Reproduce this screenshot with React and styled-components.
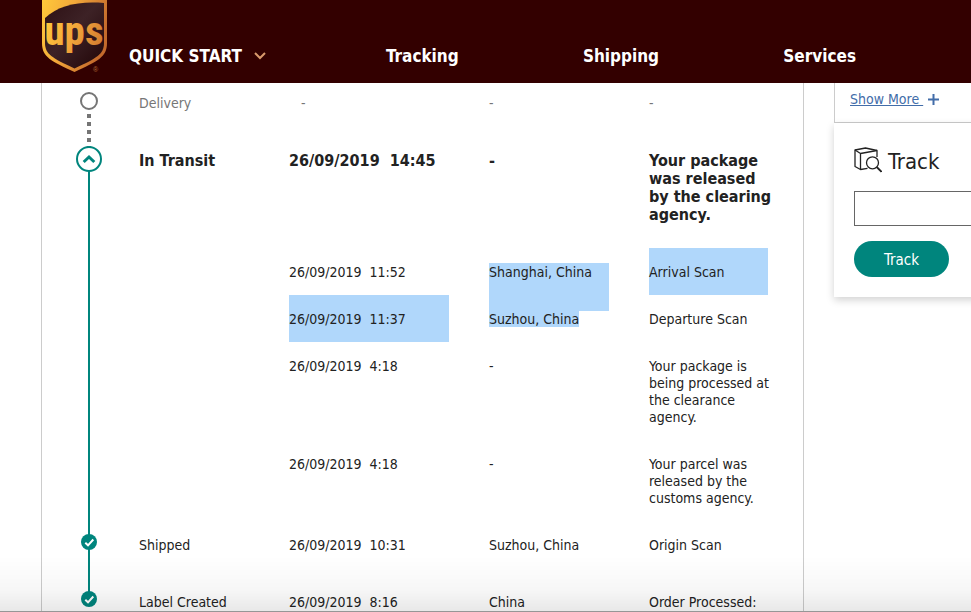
import React from 'react';
import styled, { createGlobalStyle, css } from 'styled-components';

const TEAL = '#00857d';
const SELECTION = '#b0d7fb';

const GlobalStyle = createGlobalStyle`
  * {
    box-sizing: border-box;
  }

  body {
    margin: 0;
    background: #fff;
    color: #222;
    font-family: Tahoma, "DejaVu Sans Condensed", "Noto Sans", sans-serif;
    font-size: 14px;
    line-height: 17px;
  }
`;

const Page = styled.div`
  height: 100vh;
  overflow: hidden;
  display: flex;
  flex-direction: column;
`;

const Header = styled.header`
  flex: none;
  display: flex;
  align-items: flex-start;
  gap: 21px;
  height: 83px;
  padding: 0 52px 0 41px;
  background: #330000;
`;

const LogoLink = styled.a`
  flex: none;
  display: block;
  width: 67px;
  height: 74px;
`;

const Nav = styled.nav`
  flex: 1;
  display: grid;
  grid-template-columns: 194px repeat(3, 1fr);
  justify-items: center;
  padding-top: 46px;
`;

const navItem = css`
  color: #fff;
  font-family: inherit;
  font-size: 17px;
  font-weight: bold;
  line-height: 20px;
`;

const NavLink = styled.a`
  ${navItem}
  text-decoration: none;
`;

const NavButton = styled.button`
  ${navItem}
  justify-self: start;
  display: flex;
  align-items: center;
  gap: 12px;
  padding: 0;
  border: none;
  background: none;
`;

const Main = styled.main`
  flex: 1;
  display: flex;
  align-items: stretch;
  gap: 30px;
  padding-left: 41px;
  min-height: 0;
`;

const Progress = styled.section`
  flex: 1;
  border: solid #ccc;
  border-width: 0 1px;
`;

const ProgressTable = styled.table`
  width: 100%;
  table-layout: fixed;
  border-collapse: collapse;
`;

const Col = styled.col`
  width: ${props => props.$width};
`;

const Row = styled.tr`
  color: ${props => (props.$muted ? '#767676' : 'inherit')};
  font-size: ${props => (props.$current ? '16px' : '14px')};
  font-weight: ${props => (props.$current ? 'bold' : 'normal')};
  line-height: ${props => (props.$current ? '18px' : '17px')};
`;

const dots = 'repeating-linear-gradient(#757575 0 4px, transparent 4px 8px)';
const line = `linear-gradient(${TEAL}, ${TEAL})`;

const rails = {
    pending: `${dots} 45px 31px / 4px 100% no-repeat`,
    current: `${dots} 45px 2px / 4px 12px no-repeat, ${line} 46px 24px / 2px 100% no-repeat`,
    done: `${line} 46px 0 / 2px 100% no-repeat`,
    last: `${line} 46px 0 / 2px 16px no-repeat`,
};

const markerTop = { pending: '8px', current: '10px', done: '13px', last: '13px' };

const MarkerCell = styled.td`
  padding: ${props => markerTop[props.$rail]} 0 0;
  background: ${props => rails[props.$rail]};
  vertical-align: top;

  svg, button {
    display: block;
    margin: 0 auto;
  }
`;

const MarkerBox = styled.div`
  width: 94px;
`;

const ToggleButton = styled.button`
  padding: 0;
  border: none;
  background: none;
`;

const Cell = styled.td`
  padding: 0 ${props => (props.$last ? '27px' : '40px')} 0 0;
  vertical-align: top;
  text-align: left;
  font-weight: inherit;
`;

const selections = {
    full: `linear-gradient(${SELECTION}, ${SELECTION})`,
    below: `linear-gradient(transparent 15px, ${SELECTION} 15px)`,
    above: `linear-gradient(${SELECTION} 16px, transparent 16px)`,
};

const CellText = styled.div`
  padding: ${props => (props.$first ? '12px' : '16px')} 0 ${props => (props.$milestone ? '24px' : '14px')};
  background: ${props => selections[props.$selection] || 'none'} no-repeat;
  background-size: ${props => (props.$last ? 'calc(100% - 8px)' : '100%')} 100%;
  white-space: pre-wrap;
`;

const Mark = styled.mark`
  background: ${SELECTION};
  color: inherit;
`;

const Sidebar = styled.aside`
  flex: 0 0 137px;
  min-width: 0;
`;

// both panels run past the right edge of the window
const MorePanel = styled.div`
  width: 300px;
  height: 40px;
  padding: 8px 15px;
  border: solid #ccc;
  border-width: 0 0 1px 1px;
`;

const MoreLink = styled.a`
  display: inline-flex;
  align-items: center;
  gap: 5px;
  color: #426da9;
  text-decoration: none;

  span {
    text-decoration: underline;
    white-space: pre;
  }
`;

const TrackPanel = styled.form`
  width: 300px;
  padding: 24px 20px 20px;
  box-shadow: 0 3px 8px rgba(0, 0, 0, 0.18);
`;

const TrackTitle = styled.label`
  display: flex;
  align-items: center;
  gap: 6px;
  margin-bottom: 14px;
  font-size: 22px;
  line-height: 30px;
`;

const TrackInput = styled.input`
  display: block;
  width: 100%;
  height: 35px;
  margin-bottom: 15px;
  border: 1px solid #666;
  background: #fff;
`;

const TrackButton = styled.button`
  width: 95px;
  height: 36px;
  padding: 2px 0 0;
  border: none;
  border-radius: 18px;
  background: ${TEAL};
  color: #fff;
  font-family: inherit;
  font-size: 15px;
`;

const BottomShade = styled.div`
  position: fixed;
  left: 0;
  right: 0;
  bottom: 0;
  height: 56px;
  border-bottom: 1px solid #969696;
  background: linear-gradient(rgba(0, 0, 0, 0), rgba(0, 0, 0, 0.03) 60%, rgba(0, 0, 0, 0.09));
  pointer-events: none;
`;

const Logo = () => (
    <svg width="67" height="74" viewBox="0 0 67 74" role="img" aria-label="UPS">
        <defs>
            <linearGradient id="gold" x1="0" y1="0" x2="1" y2="0.35">
                <stop offset="0" stopColor="#ffc93a"/>
                <stop offset="0.45" stopColor="#f3a93a"/>
                <stop offset="1" stopColor="#c46a2c"/>
            </linearGradient>
            <linearGradient id="brown" x1="0" y1="0" x2="1" y2="1">
                <stop offset="0" stopColor="#2d1014"/>
                <stop offset="0.45" stopColor="#3d2226"/>
                <stop offset="1" stopColor="#210507"/>
            </linearGradient>
            <linearGradient id="letters" gradientUnits="userSpaceOnUse" x1="5" y1="20" x2="62" y2="45">
                <stop offset="0" stopColor="#ffc93c"/>
                <stop offset="0.5" stopColor="#f2a53a"/>
                <stop offset="1" stopColor="#d07a30"/>
            </linearGradient>
        </defs>
        <path d="M1 0H66V43C66 57 57 61 33.500 72C10 61 1 57 1 43Z" fill="url(#gold)"/>
        <path d="M4 18C18 5 38 1 63 3V43C63 54 56 58 33.500 68.500C11 58 4 54 4 43Z" fill="url(#brown)"/>
        <text x="33" y="45" textAnchor="middle" fontFamily='"Liberation Sans Narrow", "Roboto Condensed", "DejaVu Sans Condensed", sans-serif' fontWeight="bold" fontSize="41" fill="url(#letters)">ups</text>
        <text x="52" y="72" fontFamily="Liberation Sans, sans-serif" fontSize="7" fill="#b56a35">®</text>
    </svg>
);

const DownIcon = () => (
    <svg width="12" height="8" viewBox="0 0 12 8" fill="none" stroke="#d99a6c" strokeWidth="2" aria-hidden="true">
        <path d="M1 1L6 6L11 1"/>
    </svg>
);

const PendingIcon = () => (
    <svg width="20" height="20" viewBox="0 0 20 20" aria-hidden="true">
        <circle cx="10" cy="10" r="8" fill="#fff" stroke="#757575" strokeWidth="2"/>
    </svg>
);

const CurrentIcon = () => (
    <svg width="26" height="26" viewBox="0 0 26 26" fill="none" stroke={TEAL} aria-hidden="true">
        <circle cx="13" cy="13" r="12" fill="#fff" strokeWidth="2"/>
        <path d="M7.700 16L13 11L18.300 16" strokeWidth="3"/>
    </svg>
);

const DoneIcon = () => (
    <svg width="16" height="16" viewBox="0 0 16 16" fill="none" aria-hidden="true">
        <circle cx="8" cy="8" r="8" fill={TEAL}/>
        <path d="M4.300 8.800L7 11.300L12.300 5.500" stroke="#fff" strokeWidth="2"/>
    </svg>
);

const PlusIcon = () => (
    <svg width="11" height="11" viewBox="0 0 11 11" stroke="#426da9" strokeWidth="2" aria-hidden="true">
        <path d="M5.500 0V11M0 5.500H11"/>
    </svg>
);

const PackageIcon = () => (
    <svg width="28" height="30" viewBox="0 0 28 30" fill="none" stroke="#222" strokeWidth="1.300" strokeLinejoin="round" aria-hidden="true">
        <path d="M13.500 21.300L6.500 22.500L1 19.500V3L11.500 1L23 3.500V10"/>
        <path d="M1 3L6.500 6.500V22.500M6.500 6.500L23 3.500"/>
        <circle cx="18.500" cy="15.800" r="6"/>
        <path d="M22.700 20L27.500 24.800" strokeWidth="1.800"/>
    </svg>
);

const icons = {
    pending: <PendingIcon/>,
    done: <DoneIcon/>,
    last: <DoneIcon/>,
};

const events = [
    { rail: 'pending', milestone: true, status: 'Delivery', date: '   -', location: '-', activity: '-' },
    { rail: 'current', milestone: true, status: 'In Transit', date: '26/09/2019  14:45', location: '-', activity: 'Your package was released by the clearing agency.' },
    { rail: 'done', date: '26/09/2019  11:52', location: 'Shanghai, China', activity: 'Arrival Scan', selected: { location: 'below', activity: 'full' } },
    { rail: 'done', date: '26/09/2019  11:37', location: 'Suzhou, China', activity: 'Departure Scan', selected: { date: 'full', location: 'above' } },
    { rail: 'done', date: '26/09/2019  4:18', location: '-', activity: 'Your package is being processed at the clearance agency.' },
    { rail: 'done', date: '26/09/2019  4:18', location: '-', activity: 'Your parcel was released by the customs agency.' },
    { rail: 'done', milestone: true, status: 'Shipped', date: '26/09/2019  10:31', location: 'Suzhou, China', activity: 'Origin Scan' },
    { rail: 'last', milestone: true, status: 'Label Created', date: '26/09/2019  8:16', location: 'China', activity: 'Order Processed:' },
];

const EventRow = ({ event, first }) => {
    const { rail, milestone, status, selected = {} } = event;
    const current = rail === 'current';

    return (
        <Row $muted={rail === 'pending'} $current={current}>
            <MarkerCell $rail={rail}>
                <MarkerBox>
                    {current
                        ? <ToggleButton type={'button'} aria-label={'Hide details'}><CurrentIcon/></ToggleButton>
                        : milestone && icons[rail]}
                </MarkerBox>
            </MarkerCell>
            <Cell as={milestone ? 'th' : 'td'} scope={milestone ? 'row' : undefined}>
                <CellText $first={first} $milestone={milestone}>{status}</CellText>
            </Cell>
            {['date', 'location', 'activity'].map(key => (
                <Cell key={key} $last={key === 'activity'}>
                    <CellText $first={first} $milestone={milestone} $last={key === 'activity'} $selection={selected[key]}>
                        {selected[key] === 'above' ? <Mark>{event[key]}</Mark> : event[key]}
                    </CellText>
                </Cell>
            ))}
        </Row>
    );
};

const App = () => (
    <>
        <GlobalStyle/>
        <Page>
            <Header>
                <LogoLink href="#home"><Logo/></LogoLink>
                <Nav>
                    <NavButton type={'button'}>QUICK START <DownIcon/></NavButton>
                    <NavLink href="#tracking">Tracking</NavLink>
                    <NavLink href="#shipping">Shipping</NavLink>
                    <NavLink href="#services">Services</NavLink>
                </Nav>
            </Header>
            <Main>
                <Progress>
                    <ProgressTable>
                        <colgroup>
                            <Col $width="97px"/>
                            <Col $width="150px"/>
                            <Col $width="200px"/>
                            <Col $width="160px"/>
                            <Col/>
                        </colgroup>
                        <tbody>
                            {events.map((event, index) => (
                                <EventRow key={index} event={event} first={index === 0}/>
                            ))}
                        </tbody>
                    </ProgressTable>
                </Progress>
                <Sidebar>
                    <MorePanel>
                        <MoreLink href="#more"><span>{'Show More '}</span><PlusIcon/></MoreLink>
                    </MorePanel>
                    <TrackPanel>
                        <TrackTitle htmlFor="track-number"><PackageIcon/>Track</TrackTitle>
                        <TrackInput id="track-number" type="text"/>
                        <TrackButton type={'button'}>Track</TrackButton>
                    </TrackPanel>
                </Sidebar>
            </Main>
            <BottomShade/>
        </Page>
    </>
);

export default App;
